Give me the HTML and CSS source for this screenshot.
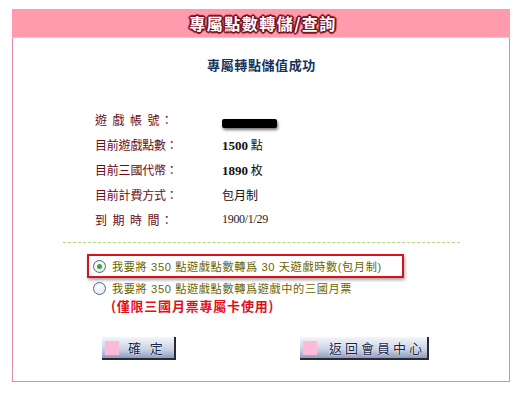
FILE: index.html
```html
<!DOCTYPE html>
<html>
<head>
<meta charset="utf-8">
<link rel="stylesheet" href="styles.css">
</head>
<body>
<div class="panel">
  <div class="head"><span class="title">專屬點數轉儲/查詢</span></div>
  <div class="body">
    <div class="sub">專屬轉點儲值成功</div>
    <div class="rows">
      <div class="row"><span class="lab spaced">遊 戲 帳 號：</span><span class="val"><span class="redact"></span></span></div>
      <div class="row"><span class="lab">目前遊戲點數：</span><span class="val"><b class="num">1500</b> 點</span></div>
      <div class="row"><span class="lab">目前三國代幣：</span><span class="val"><b class="num">1890</b> 枚</span></div>
      <div class="row"><span class="lab">目前計費方式：</span><span class="val">包月制</span></div>
      <div class="row"><span class="lab spaced">到 期 時 間：</span><span class="val date">1900/1/29</span></div>
    </div>
    <div class="dash"></div>
    <div class="opts">
      <label class="opt sel"><span class="radio on"></span>我要將 350 點遊戲點數轉爲 30 天遊戲時數(包月制)</label>
      <label class="opt"><span class="radio"></span>我要將 350 點遊戲點數轉爲遊戲中的三國月票</label>
      <div class="note">(僅限三國月票專屬卡使用)</div>
    </div>
    <div class="btns">
      <div class="btn b1"><span class="sq"></span><span class="bt">確&nbsp;&nbsp;定</span></div>
      <div class="btn b2"><span class="sq"></span><span class="bt wide">返回會員中心</span></div>
    </div>
  </div>
</div>
</body>
</html>
```
FILE: styles.css
```css
html, body { background: #fff; }
body {
  margin: 9px 17px 0 12px;
  font-family: "Liberation Sans", "Noto Sans CJK TC", sans-serif;
  font-size: 12px;
}
.panel {
  border: 1px solid #de8aa8;
  border-top: none;
  height: 373px;
  box-sizing: border-box;
}
.head {
  height: 28px;
  background: #ff9bad;
  border-bottom: 1px solid #f7c0cc;
  display: flex;
  align-items: center;
  justify-content: center;
  margin: 0 -1px;
}
.title {
  font-size: 16px;
  font-weight: bold;
  color: #fff;
  letter-spacing: 1.5px;
  padding-left: 4px;
  font-family: "Noto Sans CJK TC", sans-serif;
  text-shadow: 1px 0 0 #7a1020, -1px 0 0 #7a1020, 0 1px 0 #7a1020, 0 -1px 0 #7a1020,
    1px 1px 0 #7a1020, -1px -1px 0 #7a1020, 1px -1px 0 #7a1020, -1px 1px 0 #7a1020,
    2px 0 1px #7a1020, -2px 0 1px #7a1020, 0 2px 1px #7a1020, 0 -2px 1px #7a1020;
}
.body { display: flex; flex-direction: column; }
.sub {
  margin-top: 19px;
  text-align: center;
  font-family: "Noto Sans CJK TC", sans-serif;
  font-weight: bold;
  font-size: 13px;
  letter-spacing: 0.6px;
  line-height: 16px;
  color: #15305c;
  padding-left: 1px;
}
.rows { margin-top: 34px; padding-left: 82px; }
.row { height: 25px; display: flex; align-items: center; }
.lab {
  width: 127px;
  color: #6a0a14;
  font-family: "Noto Sans CJK TC", sans-serif;
  font-size: 12px;
  letter-spacing: -0.2px;
}
.lab.spaced { letter-spacing: 1.4px; white-space: pre; }
.val {
  color: #111;
  font-family: "Noto Sans CJK TC", sans-serif;
  font-size: 12px;
}
.num { font-family: "Liberation Serif", serif; font-size: 13px; font-weight: bold; }
.date { font-family: "Liberation Serif", serif; font-size: 12px; color: #222; letter-spacing: -0.3px; }
.redact {
  display: inline-block;
  width: 55px;
  height: 9px;
  background: #000;
  border-radius: 2px;
  box-shadow: 1px 2px 3px rgba(0,0,0,0.55);
  vertical-align: middle;
  margin-top: 4px;
}
.dash {
  margin: 10px 49px 0 50px;
  border-top: 1px dashed #b6d67a;
  height: 0;
}
.opts { margin-top: 11px; padding-left: 74px; display: flex; flex-direction: column; align-items: flex-start; }
.opt {
  display: flex;
  align-items: center;
  color: #6b6400;
  font-size: 11.2px;
  letter-spacing: 0.6px;
  font-family: "Liberation Sans", "Noto Sans CJK TC", sans-serif;
  height: 22px;
  padding-left: 5px;
  padding-right: 10px;
  white-space: pre;
}
.opt.sel {
  border: 2px solid #d6121a;
  height: 20px;
  width: 299px;
  padding-left: 4px;
  box-shadow: 1px 2px 3px rgba(0,0,0,0.35);
}
.opt:not(.sel) { padding-left: 6px; margin-top: -1px; }
.radio {
  width: 11px;
  height: 11px;
  border: 1px solid #4a6a96;
  border-radius: 50%;
  background: radial-gradient(circle at 40% 40%, #fff, #dde4ec);
  margin-right: 6px;
  position: relative;
  flex: none;
}
.radio.on::after {
  content: "";
  position: absolute;
  left: 3px; top: 3px;
  width: 5px; height: 5px;
  border-radius: 50%;
  background: #3ea33a;
}
.note {
  color: #e0101a;
  font-weight: bold;
  font-size: 13px;
  font-family: "Noto Sans CJK TC", sans-serif;
  letter-spacing: 0.8px;
  padding-left: 24px;
  margin-top: -2px;
  line-height: 18px;
}
.btns { margin-top: 22px; display: flex; padding-left: 89px; }
.btn {
  height: 23px;
  box-sizing: border-box;
  background: linear-gradient(#f4f6fa, #c9d1e2 60%, #8e9bbb);
  border-right: 2px solid #2a2a35;
  border-bottom: 2px solid #2a2a35;
  display: flex;
  align-items: center;
  padding-left: 3px;
}
.b1 { width: 74px; }
.b2 { width: 129px; margin-left: 124px; }
.sq { width: 14px; height: 14px; background: #fbbbd8; flex: none; }
.bt {
  margin-left: 9px;
  font-size: 13px;
  color: #15254a;
  font-family: "Noto Sans CJK TC", sans-serif;
  letter-spacing: 1px;
  text-shadow: 0 0 2px #fff, 0 0 1px #fff;
  white-space: pre;
}
.bt.wide { letter-spacing: 3px; margin-left: 12px; }
```
